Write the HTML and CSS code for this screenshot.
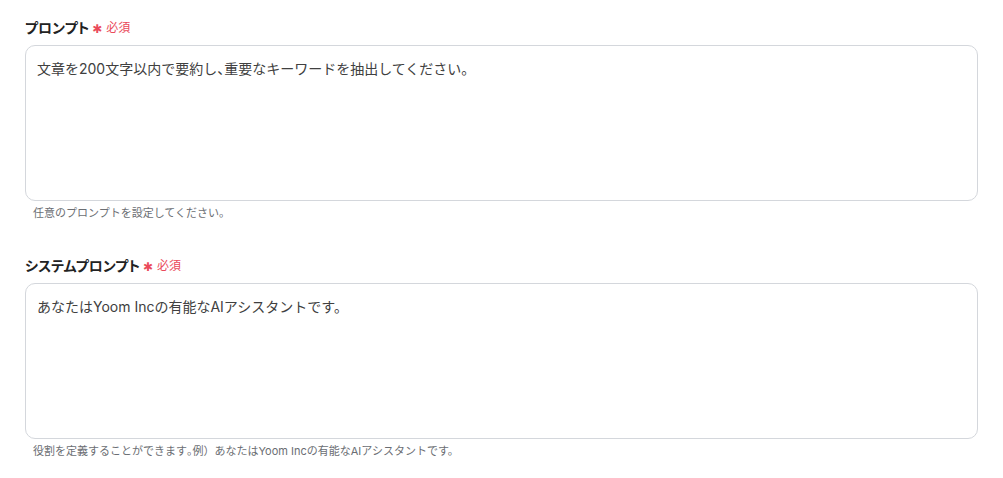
FILE: index.html
```html
<!DOCTYPE html>
<html lang="ja">
<head>
<meta charset="utf-8">
<link rel="stylesheet" href="styles.css">
</head>
<body>
<div class="form">
  <div class="field">
    <div class="label"><span class="label-text">プロンプト</span><span class="req"><span class="star">✱</span>必須</span></div>
    <div class="box">文章を200文字以内で要約し<span class="half">、</span>重要なキーワードを抽出してください。</div>
    <div class="help">任意のプロンプトを設定してください。</div>
  </div>
  <div class="field">
    <div class="label"><span class="label-text">システムプロンプト</span><span class="req"><span class="star">✱</span>必須</span></div>
    <div class="box">あなたはYoom Incの有能なAIアシスタントです。</div>
    <div class="help">役割を定義することができます<span class="half">。</span>例）あなたはYoom Incの有能なAIアシスタントです。</div>
  </div>
</div>
</body>
</html>
```
FILE: styles.css
```css
html, body {
  margin: 0;
  padding: 0;
  background: #ffffff;
}
body {
  font-family: Inter, "Noto Sans CJK JP", sans-serif;
  color: #333333;
}
.form {
  padding: 17px 25px 0 25px;
  display: flex;
  flex-direction: column;
  gap: 34px;
}
.field {
  display: flex;
  flex-direction: column;
}
.label {
  display: flex;
  align-items: center;
  height: 19px;
  margin-bottom: 9px;
}
.label-text {
  font-size: 14px;
  font-weight: 700;
  color: #222222;
  font-feature-settings: "palt";
}
.req {
  display: flex;
  align-items: center;
  margin-left: 3px;
  font-size: 12px;
  color: #ea4a5a;
  font-weight: 400;
}
.star {
  font-family: "DejaVu Sans", sans-serif;
  font-size: 12px;
  margin-right: 4px;
  position: relative;
  top: 2px;
}
.half {
  font-feature-settings: "halt";
}
.box {
  box-sizing: border-box;
  height: 156px;
  border: 1px solid #d4d7dc;
  border-radius: 10px;
  padding: 11px 11px;
  font-size: 14px;
  line-height: 24px;
  color: #404040;
}
.help {
  margin-top: 4px;
  margin-left: 8px;
  font-size: 11px;
  line-height: 16px;
  color: #6b6e73;
}
```
